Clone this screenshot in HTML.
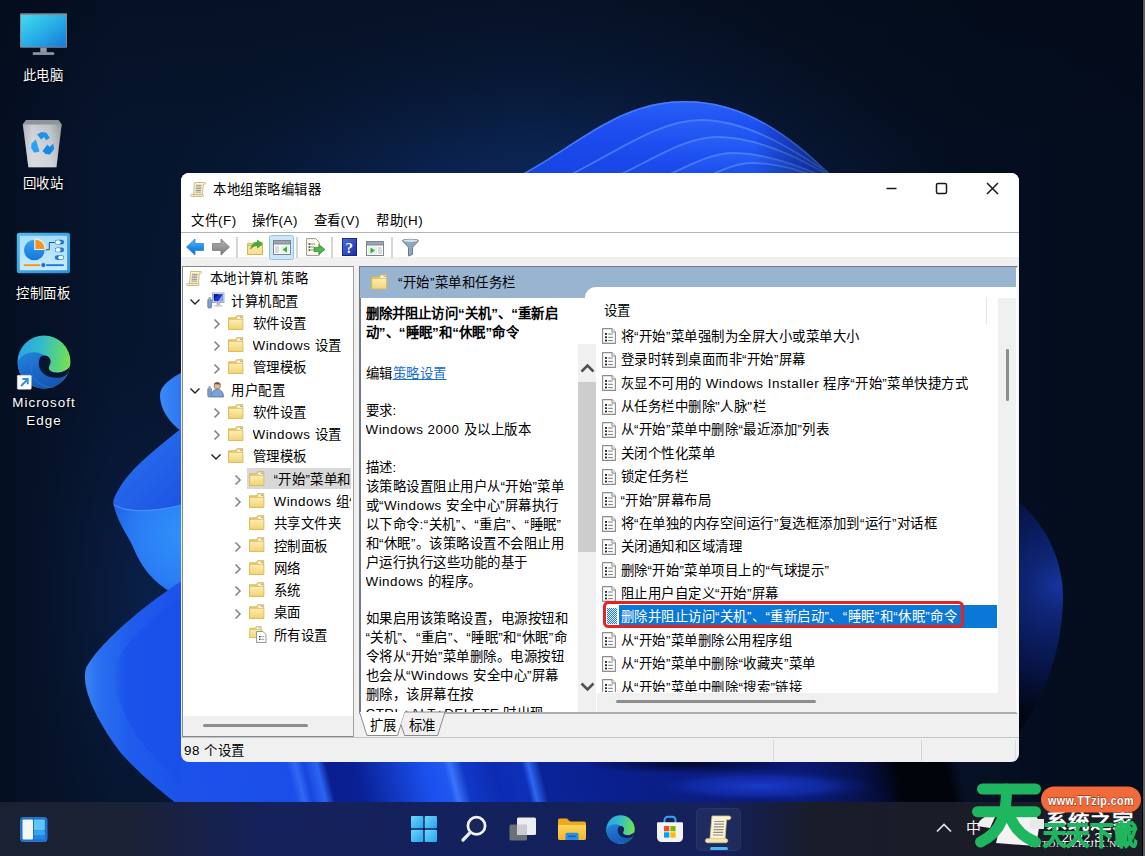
<!DOCTYPE html>
<html lang="zh-CN"><head><meta charset="utf-8"><title>本地组策略编辑器</title>
<style>
html,body{margin:0;padding:0;}
body{width:1145px;height:856px;overflow:hidden;position:relative;background:#060d1c;font-family:"Liberation Sans",sans-serif;font-size:13.4px;color:#000;letter-spacing:.5px;}
.abs{position:absolute;}
.t{position:absolute;white-space:nowrap;line-height:18px;height:18px;overflow:hidden;color:#000;}
.dl{position:absolute;white-space:nowrap;color:#fff;text-align:center;line-height:18px;font-size:13.4px;text-shadow:0 1px 2px rgba(0,0,0,.95),0 0 2px rgba(0,0,0,.8);}
#win{position:absolute;left:181px;top:173px;width:838px;height:589px;background:#f0f0f0;border-radius:8px;overflow:hidden;}
svg{position:absolute;overflow:visible;}
</style></head><body>
<svg id="wall" width="1145" height="856" viewBox="0 0 1145 856" style="left:0;top:0;overflow:hidden">
<defs>
<linearGradient id="bg" x1="0" y1="0" x2="1" y2="0">
<stop offset="0" stop-color="#050f22"/><stop offset=".1" stop-color="#06152e"/><stop offset=".45" stop-color="#071730"/><stop offset=".7" stop-color="#051124"/><stop offset=".87" stop-color="#040e20"/><stop offset="1" stop-color="#040d1e"/>
</linearGradient>
<radialGradient id="glow" cx="0" cy="0" r="1" gradientUnits="userSpaceOnUse" gradientTransform="translate(560 310) scale(430 340)">
<stop offset="0" stop-color="#113886" stop-opacity=".75"/><stop offset=".5" stop-color="#0f3276" stop-opacity=".42"/><stop offset="1" stop-color="#0b1c44" stop-opacity="0"/>
</radialGradient>
<radialGradient id="glow2" cx="0" cy="0" r="1" gradientUnits="userSpaceOnUse" gradientTransform="translate(150 600) scale(130 260)">
<stop offset="0" stop-color="#0f2c66" stop-opacity=".5"/><stop offset="1" stop-color="#0b1c44" stop-opacity="0"/>
</radialGradient>
<linearGradient id="topdark" x1="0" y1="0" x2="0" y2="1"><stop offset="0" stop-color="#030812" stop-opacity=".35"/><stop offset="1" stop-color="#030812" stop-opacity="0"/></linearGradient>
<linearGradient id="a1" x1="0" y1="101" x2="0" y2="190" gradientUnits="userSpaceOnUse"><stop offset="0" stop-color="#2a60f6"/><stop offset=".3" stop-color="#1d4ef0"/><stop offset="1" stop-color="#1640de"/></linearGradient>
<linearGradient id="a2" x1="0" y1="120" x2="0" y2="190" gradientUnits="userSpaceOnUse"><stop offset="0" stop-color="#2a60f6"/><stop offset=".35" stop-color="#1d4ef0"/><stop offset="1" stop-color="#1640de"/></linearGradient>
<linearGradient id="a3" x1="0" y1="137" x2="0" y2="190" gradientUnits="userSpaceOnUse"><stop offset="0" stop-color="#2a60f6"/><stop offset=".4" stop-color="#1d4ef0"/><stop offset="1" stop-color="#1640de"/></linearGradient>
<linearGradient id="a4" x1="0" y1="153" x2="0" y2="190" gradientUnits="userSpaceOnUse"><stop offset="0" stop-color="#2a60f6"/><stop offset=".5" stop-color="#1d4ef0"/><stop offset="1" stop-color="#1842e0"/></linearGradient>
<linearGradient id="ashade" x1="520" y1="0" x2="845" y2="0" gradientUnits="userSpaceOnUse"><stop offset="0" stop-color="#000" stop-opacity="0"/><stop offset=".72" stop-color="#000" stop-opacity="0"/><stop offset="1" stop-color="#020828" stop-opacity=".6"/></linearGradient>
<clipPath id="arcclip"><path d="M470 195 C560 170 600 101 685 101 C745 101 795 135 850 195 Z"/></clipPath>
<linearGradient id="p1" x1="160" y1="0" x2="195" y2="0" gradientUnits="userSpaceOnUse"><stop offset="0" stop-color="#3b8af7"/><stop offset="1" stop-color="#2468ee"/></linearGradient>
<linearGradient id="p2" x1="113" y1="440" x2="190" y2="520" gradientUnits="userSpaceOnUse"><stop offset="0" stop-color="#2a72f0"/><stop offset="1" stop-color="#1a4fe0"/></linearGradient>
<radialGradient id="p2c" cx="185" cy="535" r="85" gradientUnits="userSpaceOnUse"><stop offset="0" stop-color="#2f92fa"/><stop offset=".6" stop-color="#2a7cf4"/><stop offset="1" stop-color="#1c58e4"/></radialGradient>
<linearGradient id="p3" x1="84" y1="0" x2="200" y2="0" gradientUnits="userSpaceOnUse"><stop offset="0" stop-color="#3a88f6"/><stop offset=".12" stop-color="#2a70f0"/><stop offset=".4" stop-color="#1f5cec"/><stop offset="1" stop-color="#1a4ee8"/></linearGradient>
<linearGradient id="p3i" x1="112" y1="0" x2="230" y2="0" gradientUnits="userSpaceOnUse"><stop offset="0" stop-color="#2566ef"/><stop offset=".12" stop-color="#1b52ea"/><stop offset=".6" stop-color="#1a50ea"/><stop offset="1" stop-color="#1644e0"/></linearGradient>
<linearGradient id="bot" x1="181" y1="0" x2="1030" y2="0" gradientUnits="userSpaceOnUse" gradientTransform="rotate(-14 600 780)"><stop offset="0.0000" stop-color="#1c52ea"/><stop offset="0.1402" stop-color="#1a4eea"/><stop offset="0.1496" stop-color="#3068f4"/><stop offset="0.1590" stop-color="#1846e0"/><stop offset="0.1743" stop-color="#2c64f2"/><stop offset="0.1849" stop-color="#0a1e90"/><stop offset="0.2167" stop-color="#0a2094"/><stop offset="0.2968" stop-color="#1a50ee"/><stop offset="0.3192" stop-color="#2058f0"/><stop offset="0.3263" stop-color="#3a74f8"/><stop offset="0.3404" stop-color="#1238c8"/><stop offset="0.3757" stop-color="#0c2cb0"/><stop offset="0.4087" stop-color="#0e30b8"/><stop offset="0.4158" stop-color="#2e66f2"/><stop offset="0.4287" stop-color="#0a2498"/><stop offset="0.4935" stop-color="#0a2090"/><stop offset="0.6113" stop-color="#0a1c80"/><stop offset="0.7291" stop-color="#0a1a74"/><stop offset="0.7880" stop-color="#07124e"/><stop offset="0.8174" stop-color="#040a2c"/><stop offset="0.8351" stop-color="#02040c"/><stop offset="0.8916" stop-color="#02040c"/><stop offset="0.9081" stop-color="#071126"/><stop offset="0.9529" stop-color="#051022"/><stop offset="1.0000" stop-color="#040e20"/></linearGradient>
<radialGradient id="lens" cx="0" cy="0" r="1" gradientUnits="userSpaceOnUse" gradientTransform="translate(760 786) scale(115 16)"><stop offset="0" stop-color="#1a3cd0" stop-opacity=".95"/><stop offset=".6" stop-color="#1432b8" stop-opacity=".6"/><stop offset="1" stop-color="#0a1a78" stop-opacity="0"/></radialGradient>
<radialGradient id="cres" cx="0" cy="0" r="1" gradientUnits="userSpaceOnUse" gradientTransform="translate(690 764) scale(110 10)"><stop offset="0" stop-color="#030828" stop-opacity=".9"/><stop offset="1" stop-color="#030828" stop-opacity="0"/></radialGradient>
<radialGradient id="ball" cx="1058" cy="585" r="150" gradientUnits="userSpaceOnUse"><stop offset="0" stop-color="#17349c"/><stop offset=".18" stop-color="#0f2678"/><stop offset=".5" stop-color="#081750"/><stop offset=".85" stop-color="#030818"/><stop offset="1" stop-color="#02050e"/></radialGradient>
</defs>
<rect width="1145" height="856" fill="url(#bg)"/>
<rect width="1145" height="856" fill="url(#glow)"/>
<rect width="1145" height="856" fill="url(#glow2)"/>
<rect width="1145" height="150" fill="url(#topdark)"/>
<!-- top arc petals -->
<g clip-path="url(#arcclip)">
<rect x="460" y="95" width="400" height="100" fill="url(#a1)"/>
<path d="M470 195 C560 170 600 101 685 101 C745 101 795 135 850 195" fill="none" stroke="#4a84fc" stroke-width="3" opacity=".8"/>
<g stroke="#4a82fb" stroke-width="1.800" stroke-opacity=".85">
<path d="M515 197 C590 176 645 120 701 120 C745 120 790 145 860 195 Z" fill="url(#a2)"/>
<path d="M560 197 C630 180 672 137 717 137 C755 137 800 155 860 195 Z" fill="url(#a3)"/>
<path d="M605 197 C670 182 698 153 733 153 C765 153 805 165 860 195 Z" fill="url(#a4)"/>
<path d="M645 197 C700 186 724 163 752 163 C780 163 810 172 860 195 Z" fill="#1e52ee"/>
</g>
<rect x="460" y="95" width="400" height="100" fill="url(#ashade)"/>
</g>
<!-- left petals -->
<path d="M200 364 C180 372 160 383 160 395 C160 412 172 428 200 444 Z" fill="url(#p1)"/>
<path d="M200 414 C175 434 135 462 120 487 C114 497 112 502 114 506 C119 526 129 536 134 549 C141 566 152 581 172 593 L200 608 Z" fill="url(#p2)"/>
<path d="M114 505 C130 514 160 512 200 500 L200 608 L172 593 C152 581 141 566 134 549 C129 536 119 526 114 505 Z" fill="url(#p2c)"/><path d="M114 505 C130 514 160 512 200 500" fill="none" stroke="#4d9dfa" stroke-width="1.200" opacity=".8"/>
<path d="M200 570 C160 592 100 640 86 668 C80 690 100 725 120 752 C140 775 165 795 200 822 L330 822 L330 570 Z" fill="url(#p3)"/>
<path d="M200 583 C165 605 125 640 117 662 C110 690 125 718 140 740 C160 765 180 785 215 817 L330 817 L330 583 Z" fill="url(#p3i)"/>
<!-- bottom strip -->
<rect x="181" y="750" width="838" height="56" fill="url(#bot)"/>
<rect x="560" y="750" width="330" height="56" fill="url(#cres)"/>
<rect x="600" y="750" width="300" height="56" fill="url(#lens)"/>
<!-- right ball -->
<path d="M1010 495 C1045 520 1064 560 1063 600 C1062 650 1045 700 1010 745 Z" fill="url(#ball)"/>
</svg>
<div class="abs" id="taskbar" style="left:0;top:802px;width:1145px;height:54px;background:linear-gradient(90deg,#1a2132 0%,#1a2134 11%,#15215a 23%,#13215c 40%,#14215a 63%,#161e42 67%,#191c29 71%,#1b1d26 100%);"></div>
<svg width="0" height="0" style="left:0;top:0"><defs>
<linearGradient id="gfold" x1="0" y1="0" x2="0" y2="1"><stop offset="0" stop-color="#fdeeb4"/><stop offset="1" stop-color="#f3d474"/></linearGradient>
<symbol id="fold" viewBox="0 0 16 15.500">
<path d="M.6 2.900h7l1.400-2.200h6.400v14.200H.6z" fill="#f1d274" stroke="#d8b352" stroke-width=".9" stroke-linejoin="round"/>
<path d="M9.700 1.700h4.700v2.400H9.700z" fill="#fff"/><path d="M12.200 1.700h2.200v1.300h-2.200z" fill="#8ab4e0"/>
<path d="M.6 4.400h14.800v10.500H.6z" fill="url(#gfold)" stroke="#dcb95a" stroke-width=".9" stroke-linejoin="round"/>
</symbol>
<symbol id="pol" viewBox="0 0 14 16">
<path d="M.6.6h9.3l3.5 3.5v11.3H.6z" fill="#fff" stroke="#8c8c8c" stroke-width="1.1" stroke-linejoin="round"/>
<path d="M9.9.6v3.5h3.5" fill="#f2f2f2" stroke="#8c8c8c" stroke-width="1"/>
<rect x="3" y="5" width="2" height="1.8" fill="#222"/><rect x="3" y="8.3" width="2" height="1.8" fill="#222"/><rect x="3" y="11.6" width="2" height="1.8" fill="#222"/>
<rect x="6.2" y="5.5" width="4.6" height="1" fill="#777"/><rect x="6.2" y="8.8" width="4.6" height="1" fill="#777"/><rect x="6.2" y="12.1" width="4.6" height="1" fill="#777"/>
</symbol>
<symbol id="scroll" viewBox="0 0 17 17">
<path d="M4.5 1.5h10.3c1 0 1.2 1.6 0 1.8h-1.4l-1 10.2H3.6z" fill="#fbf2cf" stroke="#c9b67c" stroke-width=".9" stroke-linejoin="round"/>
<path d="M1.2 13.4h11.4c1 .2 1 1.9 0 2.1H1.4c-1-.3-1-1.8-.2-2.1z" fill="#f7eab6" stroke="#c9b67c" stroke-width=".9"/>
<path d="M6 4.3h5.6M5.9 6h5.6M5.7 7.7h5.6M5.6 9.4h5.6M5.4 11.1h5.6" stroke="#8a8a8a" stroke-width=".9"/>
</symbol>
<symbol id="comp" viewBox="0 0 18 17">
<rect x="5.5" y="1" width="11.5" height="9.5" fill="#dfe5ee" stroke="#9aa7b8" stroke-width=".9"/>
<rect x="6.8" y="2.2" width="9" height="7" fill="#1a33c9"/>
<path d="M6.8 2.2h5l-5 5z" fill="#0b14a0"/><path d="M11 9.2l4.8-7v7z" fill="#8aa3ef"/>
<rect x="9.5" y="10.8" width="3.5" height="2.3" fill="#b7bec9"/><rect x="7.5" y="13" width="8" height="1.6" fill="#c9ced6"/>
<rect x=".8" y="7" width="3.8" height="9" rx="1.2" fill="#7f9fd0" stroke="#5d7cae" stroke-width=".8"/>
<rect x="1.6" y="5" width="2.2" height="3" fill="#9aa9bd"/>
</symbol>
<symbol id="user" viewBox="0 0 18 17">
<circle cx="10.3" cy="4.6" r="3.3" fill="#e3b98c" stroke="#8a6a4a" stroke-width=".7"/>
<path d="M7 3.5c.6-2.6 5.6-2.8 6.6.3-1.6-.6-4.4-.9-6.6-.3z" fill="#6b5040"/>
<path d="M4.2 16c0-5.2 2.6-7.6 6.1-7.6s6.2 2.400 6.200 7.600z" fill="#7ea0d6" stroke="#4e6fa4" stroke-width=".8"/>
<rect x=".8" y="7" width="3.600" height="9" rx="1.2" fill="#7f9fd0" stroke="#5d7cae" stroke-width=".8"/>
<rect x="1.6" y="5" width="2" height="3" fill="#9aa9bd"/>
</symbol>
<symbol id="allset" viewBox="0 0 18 17">
<use href="#fold" x="0" y="0" width="13" height="12"/>
<path d="M7.5 5.500h6.500l3 3v8h-9.500z" fill="#fff" stroke="#8c8c8c" stroke-width=".9"/>
<rect x="10" y="10" width="1.500" height="1.300" fill="#333"/><rect x="10" y="12.600" width="1.500" height="1.300" fill="#333"/><rect x="12.300" y="10.300" width="3" height=".8" fill="#888"/><rect x="12.300" y="12.900" width="3" height=".8" fill="#888"/>
</symbol>
</defs></svg>
<div id="win"><div class="abs" style="left:0.0px;top:0.0px;width:838.0px;height:84.0px;background:#fff;"></div><div class="abs" style="left:0.0px;top:59.0px;width:838.0px;height:1.0px;background:#b4b4b4;"></div><svg width="17.0" height="17.0" style="left:8.5px;top:7.5px"><use href="#scroll" width="17.0" height="17.0"/></svg><div class="t" style="left:32.0px;top:8.2px;">本地组策略编辑器</div><svg width="140" height="30" style="left:700px;top:0px"><path d="M5.500 15.500h10" stroke="#1a1a1a" stroke-width="1.500"/><rect x="55.500" y="10.500" width="10" height="10" rx="1.500" fill="none" stroke="#1a1a1a" stroke-width="1.500"/><path d="M106 10l11 11M117 10l-11 11" stroke="#1a1a1a" stroke-width="1.500"/></svg><div class="t" style="left:10.0px;top:38.7px;">文件(F)</div><div class="t" style="left:70.5px;top:38.7px;">操作(A)</div><div class="t" style="left:132.5px;top:38.7px;">查看(V)</div><div class="t" style="left:195.0px;top:38.7px;">帮助(H)</div><svg width="260" height="28" style="left:2px;top:61px"><defs><linearGradient id="gb" x1="0" y1="0" x2="0" y2="1"><stop offset="0" stop-color="#6cc3f7"/><stop offset=".5" stop-color="#1f8fe8"/><stop offset="1" stop-color="#0f6fd0"/></linearGradient>
<linearGradient id="gg" x1="0" y1="0" x2="0" y2="1"><stop offset="0" stop-color="#b5b5b5"/><stop offset="1" stop-color="#7b7b7b"/></linearGradient>
<linearGradient id="gq" x1="0" y1="0" x2="1" y2="1"><stop offset="0" stop-color="#4a6fe0"/><stop offset="1" stop-color="#1a2fa8"/></linearGradient></defs>
<path d="M3.500 13l8.500-8v4.600h8.500v6.800h-8.500v4.600z" fill="url(#gb)" stroke="#2d7fd0" stroke-width=".8" stroke-linejoin="round"/>
<path d="M46.500 13l-8.500-8v4.600h-8.500v6.800h8.500v4.600z" fill="url(#gg)" stroke="#777" stroke-width=".8" stroke-linejoin="round"/>
<rect x="53.500" y="3" width="1" height="21" fill="#aeaeae"/>
<g transform="translate(64,5)"><path d="M.6 4.500h5l1.500-1.300h8.300v12.300H.6z" fill="#f4d77e" stroke="#d2ad52" stroke-width=".9"/><path d="M.6 6.500h14.800v9H.6z" fill="#f8e39a" stroke="#d2ad52" stroke-width=".9"/><path d="M3.500 10c1.500-5 4-6.500 7-6.500v-2.500l4.500 4-4.500 4v-2.500c-2.500 0-4.500.5-7 3.500z" fill="#3fae3f" stroke="#2a8a2a" stroke-width=".6"/></g>
<rect x="86.500" y="1.500" width="24" height="24" rx="2" fill="#cde6f7" stroke="#8fc4ea" stroke-width="1"/>
<g transform="translate(90,6)"><rect x=".5" y=".5" width="17" height="14" fill="#fff" stroke="#7d8794" stroke-width="1"/><rect x=".5" y=".5" width="17" height="3.500" fill="#9aa5b3" stroke="#7d8794"/><rect x="2" y="6" width="4" height="7" fill="#d7dde5"/><rect x="7.500" y="5.500" width="9" height="8" fill="#e6f3e6"/><path d="M14 6.500v6l-4.500-3z" fill="#3cae3c"/></g>
<rect x="113.500" y="3" width="1" height="21" fill="#aeaeae"/>
<g transform="translate(123,4)"><path d="M.6.600h9l3.500 3.500v13.300H.6z" fill="#fffdf0" stroke="#9a9a8a" stroke-width="1"/><path d="M3 6h6M3 9h5M3 12h5" stroke="#8b8b8b" stroke-width="1.200"/><rect x="2.500" y="5.400" width="1.500" height="1.300" fill="#333"/><rect x="2.500" y="8.400" width="1.500" height="1.300" fill="#333"/><rect x="2.500" y="11.400" width="1.500" height="1.300" fill="#333"/><path d="M8 9.500h5v-3l6 5-6 5v-3h-5z" fill="#4cba4c" stroke="#2c8c2c" stroke-width=".7" stroke-linejoin="round"/></g>
<rect x="148.500" y="3" width="1" height="21" fill="#aeaeae"/>
<g transform="translate(159,4)"><rect x=".5" y=".5" width="14" height="17" fill="url(#gq)" stroke="#18267e" stroke-width="1"/><text x="7.500" y="14.500" text-anchor="middle" font-family="Liberation Serif,serif" font-weight="bold" font-size="15" fill="#fff">?</text></g>
<g transform="translate(183,7)"><rect x=".5" y=".5" width="17" height="14" fill="#fff" stroke="#7d8794" stroke-width="1"/><rect x=".5" y=".5" width="17" height="3.500" fill="#9aa5b3" stroke="#7d8794"/><rect x="12" y="6" width="4" height="7" fill="#d7dde5"/><rect x="2" y="5.500" width="9" height="8" fill="#e6f3e6"/><path d="M4.500 6.500v6l4.500-3z" fill="#3cae3c"/></g>
<rect x="208.500" y="3" width="1" height="21" fill="#aeaeae"/>
<g transform="translate(219,5)"><path d="M.5 1.500c0-1.500 16-1.500 16 0 0 1.200-6 6-6 7.500v6.500l-4 1.500v-8c0-1.500-6-6.300-6-7.500z" fill="#8fa6bf" stroke="#5f748c" stroke-width=".9"/><ellipse cx="8.500" cy="1.700" rx="7" ry="1.200" fill="#d9e3ee"/></g>
</svg><div class="abs" style="left:1.0px;top:93.0px;width:172.0px;height:471.0px;background:#fff;border:1px solid #828790;box-sizing:border-box;border-right-color:#a0a0a0;"></div><div class="abs" style="left:2.0px;top:543.0px;width:170.0px;height:20.0px;background:#f0f0f0;"></div><div class="abs" style="left:21.5px;top:550.8px;width:105.5px;height:3.0px;background:#8d8d8d;border-radius:1.500px;"></div><div class="abs" style="left:2px;top:94px;width:167.500px;height:449px;overflow:hidden"><svg width="17" height="17" style="left:3.0px;top:2.7px"><use href="#scroll" width="17" height="17"/></svg><div class="t" style="left:26.5px;top:3.2px">本地计算机 策略</div><svg width="12" height="10" style="left:5.5px;top:29.5px"><path d="M1.500 2.500l4.500 4.500 4.500-4.500" fill="none" stroke="#222" stroke-width="1.400"/></svg><svg width="18" height="17" style="left:24.0px;top:25.0px"><use href="#comp" width="18" height="17"/></svg><div class="t" style="left:48.0px;top:25.5px">计算机配置</div><svg width="10" height="12" style="left:28.5px;top:51.0px"><path d="M2.500 1.500l4.500 4.500-4.500 4.500" fill="none" stroke="#858585" stroke-width="1.600"/></svg><svg width="15.500" height="15" style="left:45.4px;top:47.6px"><use href="#fold" width="15.500" height="15"/></svg><div class="t" style="left:69.5px;top:47.8px">软件设置</div><svg width="10" height="12" style="left:28.5px;top:73.2px"><path d="M2.500 1.500l4.500 4.500-4.500 4.500" fill="none" stroke="#858585" stroke-width="1.600"/></svg><svg width="15.500" height="15" style="left:45.4px;top:69.8px"><use href="#fold" width="15.500" height="15"/></svg><div class="t" style="left:69.5px;top:70.0px">Windows 设置</div><svg width="10" height="12" style="left:28.5px;top:95.5px"><path d="M2.500 1.500l4.500 4.500-4.500 4.500" fill="none" stroke="#858585" stroke-width="1.600"/></svg><svg width="15.500" height="15" style="left:45.4px;top:92.1px"><use href="#fold" width="15.500" height="15"/></svg><div class="t" style="left:69.5px;top:92.3px">管理模板</div><svg width="12" height="10" style="left:5.5px;top:118.6px"><path d="M1.500 2.500l4.500 4.500 4.500-4.500" fill="none" stroke="#222" stroke-width="1.400"/></svg><svg width="18" height="17" style="left:24.0px;top:114.1px"><use href="#user" width="18" height="17"/></svg><div class="t" style="left:48.0px;top:114.6px">用户配置</div><svg width="10" height="12" style="left:28.5px;top:140.1px"><path d="M2.500 1.500l4.500 4.500-4.500 4.500" fill="none" stroke="#858585" stroke-width="1.600"/></svg><svg width="15.500" height="15" style="left:45.4px;top:136.7px"><use href="#fold" width="15.500" height="15"/></svg><div class="t" style="left:69.5px;top:136.9px">软件设置</div><svg width="10" height="12" style="left:28.5px;top:162.4px"><path d="M2.500 1.500l4.500 4.500-4.500 4.500" fill="none" stroke="#858585" stroke-width="1.600"/></svg><svg width="15.500" height="15" style="left:45.4px;top:159.0px"><use href="#fold" width="15.500" height="15"/></svg><div class="t" style="left:69.5px;top:159.2px">Windows 设置</div><svg width="12" height="10" style="left:27.0px;top:185.4px"><path d="M1.500 2.500l4.500 4.500 4.500-4.500" fill="none" stroke="#222" stroke-width="1.400"/></svg><svg width="15.500" height="15" style="left:45.4px;top:181.2px"><use href="#fold" width="15.500" height="15"/></svg><div class="t" style="left:69.5px;top:181.4px">管理模板</div><div class="abs" style="left:64.0px;top:201.2px;width:120px;height:21px;background:#d8d8d8"></div><svg width="10" height="12" style="left:50.0px;top:206.9px"><path d="M2.500 1.500l4.500 4.500-4.500 4.500" fill="none" stroke="#858585" stroke-width="1.600"/></svg><svg width="15.500" height="15" style="left:66.4px;top:203.5px"><use href="#fold" width="15.500" height="15"/></svg><div class="t" style="left:90.5px;top:203.7px">“开始”菜单和任务栏</div><svg width="10" height="12" style="left:50.0px;top:229.2px"><path d="M2.500 1.500l4.500 4.500-4.500 4.500" fill="none" stroke="#858585" stroke-width="1.600"/></svg><svg width="15.500" height="15" style="left:66.4px;top:225.8px"><use href="#fold" width="15.500" height="15"/></svg><div class="t" style="left:90.5px;top:226.0px">Windows 组件</div><svg width="15.500" height="15" style="left:66.4px;top:248.1px"><use href="#fold" width="15.500" height="15"/></svg><div class="t" style="left:90.5px;top:248.3px">共享文件夹</div><svg width="10" height="12" style="left:50.0px;top:273.8px"><path d="M2.500 1.500l4.500 4.500-4.500 4.500" fill="none" stroke="#858585" stroke-width="1.600"/></svg><svg width="15.500" height="15" style="left:66.4px;top:270.4px"><use href="#fold" width="15.500" height="15"/></svg><div class="t" style="left:90.5px;top:270.6px">控制面板</div><svg width="10" height="12" style="left:50.0px;top:296.0px"><path d="M2.500 1.500l4.500 4.500-4.500 4.500" fill="none" stroke="#858585" stroke-width="1.600"/></svg><svg width="15.500" height="15" style="left:66.4px;top:292.6px"><use href="#fold" width="15.500" height="15"/></svg><div class="t" style="left:90.5px;top:292.8px">网络</div><svg width="10" height="12" style="left:50.0px;top:318.3px"><path d="M2.500 1.500l4.500 4.500-4.500 4.500" fill="none" stroke="#858585" stroke-width="1.600"/></svg><svg width="15.500" height="15" style="left:66.4px;top:314.9px"><use href="#fold" width="15.500" height="15"/></svg><div class="t" style="left:90.5px;top:315.1px">系统</div><svg width="10" height="12" style="left:50.0px;top:340.6px"><path d="M2.500 1.500l4.500 4.500-4.500 4.500" fill="none" stroke="#858585" stroke-width="1.600"/></svg><svg width="15.500" height="15" style="left:66.4px;top:337.2px"><use href="#fold" width="15.500" height="15"/></svg><div class="t" style="left:90.5px;top:337.4px">桌面</div><svg width="18" height="17" style="left:66.0px;top:359.2px"><use href="#allset" width="18" height="17"/></svg><div class="t" style="left:90.5px;top:359.7px">所有设置</div></div><div class="abs" style="left:177.5px;top:92.8px;width:659.5px;height:448.7px;background:#fff;border-top:2px solid #737a84;border-left:2px solid #737a84;border-right:2px solid #fafafa;box-sizing:border-box;border-bottom:2px solid #adadad;"></div><div class="abs" style="left:179.0px;top:94.0px;width:656.0px;height:30.5px;background:#99b4d1;"></div><svg width="16.5" height="15.5" style="left:190.0px;top:101.0px"><use href="#fold" width="16.5" height="15.5"/></svg><div class="t" style="left:217.0px;top:100.7px;">“开始”菜单和任务栏</div><div class="abs" style="left:404.0px;top:114.0px;width:431.0px;height:425.0px;background:#fff;border-top-left-radius:11px;"></div><div class="t" style="left:422.5px;top:129.2px;">设置</div><div class="abs" style="left:804.5px;top:124.0px;width:1.0px;height:27.0px;background:#e6e6e6;"></div><div class="abs" style="left:817.4px;top:125.0px;width:18.0px;height:400.0px;background:#f0f0f0;"></div><div class="abs" style="left:825.2px;top:176.0px;width:2.6px;height:52.0px;background:#8d8d8d;border-radius:1.300px;"></div><div class="abs" style="left:416.0px;top:519.5px;width:419.0px;height:19.5px;background:#f0f0f0;"></div><div class="abs" style="left:434.5px;top:527.0px;width:200.5px;height:3.0px;background:#8d8d8d;border-radius:1.500px;"></div><div class="abs" style="left:396.5px;top:171.0px;width:18.5px;height:368.0px;background:#f0f0f0;"></div><div class="abs" style="left:396.5px;top:209.0px;width:18.5px;height:170.0px;background:#cdcdcd;"></div><svg width="19" height="12" style="left:396.5px;top:189.0px"><path d="M3.500 9.500l6-6 6 6" fill="none" stroke="#505050" stroke-width="2.500"/></svg><svg width="19" height="12" style="left:396.5px;top:508.0px"><path d="M3.500 2.500l6 6 6-6" fill="none" stroke="#505050" stroke-width="2.500"/></svg><div class="abs" style="left:416px;top:150px;width:401px;height:369px;overflow:hidden"><svg width="14" height="16" style="left:5.0px;top:5.4px"><use href="#pol" width="14" height="16"/></svg><div class="t" style="left:23.5px;top:4.8px;">将“开始”菜单强制为全屏大小或菜单大小</div><svg width="14" height="16" style="left:5.0px;top:28.8px"><use href="#pol" width="14" height="16"/></svg><div class="t" style="left:23.5px;top:28.2px;">登录时转到桌面而非“开始”屏幕</div><svg width="14" height="16" style="left:5.0px;top:52.2px"><use href="#pol" width="14" height="16"/></svg><div class="t" style="left:23.5px;top:51.6px;">灰显不可用的 Windows Installer 程序“开始”菜单快捷方式</div><svg width="14" height="16" style="left:5.0px;top:75.6px"><use href="#pol" width="14" height="16"/></svg><div class="t" style="left:23.5px;top:75.0px;">从任务栏中删除"人脉"栏</div><svg width="14" height="16" style="left:5.0px;top:98.9px"><use href="#pol" width="14" height="16"/></svg><div class="t" style="left:23.5px;top:98.3px;">从“开始”菜单中删除“最近添加”列表</div><svg width="14" height="16" style="left:5.0px;top:122.3px"><use href="#pol" width="14" height="16"/></svg><div class="t" style="left:23.5px;top:121.7px;">关闭个性化菜单</div><svg width="14" height="16" style="left:5.0px;top:145.7px"><use href="#pol" width="14" height="16"/></svg><div class="t" style="left:23.5px;top:145.1px;">锁定任务栏</div><svg width="14" height="16" style="left:5.0px;top:169.1px"><use href="#pol" width="14" height="16"/></svg><div class="t" style="left:23.5px;top:168.5px;">“开始”屏幕布局</div><svg width="14" height="16" style="left:5.0px;top:192.5px"><use href="#pol" width="14" height="16"/></svg><div class="t" style="left:23.5px;top:191.9px;">将“在单独的内存空间运行”复选框添加到“运行”对话框</div><svg width="14" height="16" style="left:5.0px;top:215.9px"><use href="#pol" width="14" height="16"/></svg><div class="t" style="left:23.5px;top:215.3px;">关闭通知和区域清理</div><svg width="14" height="16" style="left:5.0px;top:239.2px"><use href="#pol" width="14" height="16"/></svg><div class="t" style="left:23.5px;top:238.6px;">删除“开始”菜单项目上的“气球提示”</div><svg width="14" height="16" style="left:5.0px;top:262.6px"><use href="#pol" width="14" height="16"/></svg><div class="t" style="left:23.5px;top:262.0px;">阻止用户自定义“开始”屏幕</div><div class="abs" style="left:21.5px;top:282.2px;width:378.5px;height:23.100px;background:#0a78d7"></div><svg width="10" height="16" style="left:9.5px;top:285.3px"><defs><pattern id="dith" width="2" height="2" patternUnits="userSpaceOnUse"><rect width="2" height="2" fill="#dfeefa"/><rect width="1" height="1" fill="#1f7fd8"/><rect x="1" y="1" width="1" height="1" fill="#1f7fd8"/></pattern></defs><rect width="10" height="16" fill="url(#dith)"/></svg><div class="t" style="left:23.5px;top:285.4px;color:#fff;">删除并阻止访问“关机”、“重新启动”、“睡眠”和“休眠”命令</div><svg width="14" height="16" style="left:5.0px;top:309.4px"><use href="#pol" width="14" height="16"/></svg><div class="t" style="left:23.5px;top:308.8px;">从“开始”菜单删除公用程序组</div><svg width="14" height="16" style="left:5.0px;top:332.8px"><use href="#pol" width="14" height="16"/></svg><div class="t" style="left:23.5px;top:332.2px;">从“开始”菜单中删除“收藏夹”菜单</div><svg width="14" height="16" style="left:5.0px;top:356.2px"><use href="#pol" width="14" height="16"/></svg><div class="t" style="left:23.5px;top:355.6px;">从“开始”菜单中删除“搜索”链接</div></div><div class="abs" style="left:421.8px;top:427.8px;width:361.7px;height:27.5px;background:transparent;border:3px solid #e8221e;border-radius:5.500px;box-sizing:border-box;"></div><div class="abs" style="left:179px;top:124px;width:218px;height:415px;overflow:hidden"><div class="t" style="left:5.5px;top:8.0px;font-weight:bold;letter-spacing:.2px;">删除并阻止访问“关机”、“重新启</div><div class="t" style="left:5.5px;top:26.5px;font-weight:bold;letter-spacing:.2px;">动”、“睡眠”和“休眠”命令</div><div class="t" style="left:5.5px;top:67.7px;">编辑<span style="color:#1a6fd4;text-decoration:underline">策略设置</span></div><div class="t" style="left:5.5px;top:105.2px;">要求:</div><div class="t" style="left:5.5px;top:124.1px;">Windows 2000 及以上版本</div><div class="t" style="left:5.5px;top:162.0px;">描述:</div><div class="t" style="left:5.5px;top:180.9px;">该策略设置阻止用户从“开始”菜单</div><div class="t" style="left:5.5px;top:199.9px;">或“Windows 安全中心”屏幕执行</div><div class="t" style="left:5.5px;top:218.8px;">以下命令:“关机”、“重启”、“睡眠”</div><div class="t" style="left:5.5px;top:237.7px;">和“休眠”。该策略设置不会阻止用</div><div class="t" style="left:5.5px;top:256.7px;">户运行执行这些功能的基于</div><div class="t" style="left:5.5px;top:275.6px;">Windows 的程序。</div><div class="t" style="left:5.5px;top:313.4px;">如果启用该策略设置，电源按钮和</div><div class="t" style="left:5.5px;top:332.4px;">“关机”、“重启”、“睡眠”和“休眠”命</div><div class="t" style="left:5.5px;top:351.3px;">令将从“开始”菜单删除。电源按钮</div><div class="t" style="left:5.5px;top:370.2px;">也会从“Windows 安全中心”屏幕</div><div class="t" style="left:5.5px;top:389.2px;">删除，该屏幕在按</div><div class="t" style="left:5.5px;top:408.1px;">CTRL+ALT+DELETE 时出现。</div></div><svg width="120" height="26" style="left:178px;top:539px"><path d="M.5 0l7.500 23.500h30.500l7.500-23.500" fill="#fff" stroke="#8a8a8a" stroke-width="1"/><path d="M42 12.500l3.600 11h33l7.400-23.500h-40" fill="#f0f0f0" stroke="#8a8a8a" stroke-width="1"/></svg><div class="t" style="left:188.5px;top:543.7px;">扩展</div><div class="t" style="left:227.5px;top:543.7px;">标准</div><div class="abs" style="left:0.0px;top:563.5px;width:838.0px;height:1.0px;background:#c4c4c4;"></div><div class="t" style="left:3.0px;top:568.7px;">98 个设置</div><div class="abs" style="left:592.0px;top:567.0px;width:1.0px;height:21.0px;background:#d7d7d7;"></div><div class="abs" style="left:740.0px;top:567.0px;width:1.0px;height:21.0px;background:#d7d7d7;"></div><div class="abs" style="left:833.5px;top:567.0px;width:1.0px;height:21.0px;background:#dcdcdc;"></div></div><svg width="52" height="46" style="left:18px;top:11px"><defs>
<linearGradient id="scr" x1="0" y1="0" x2="1" y2="1"><stop offset="0" stop-color="#3fdcf0"/><stop offset=".55" stop-color="#27a9e6"/><stop offset="1" stop-color="#1878d8"/></linearGradient>
<linearGradient id="stand" x1="0" y1="0" x2="0" y2="1"><stop offset="0" stop-color="#9aa3ad"/><stop offset="1" stop-color="#7d858f"/></linearGradient></defs>
<rect x="2" y="2.200" width="47" height="34.500" rx="1" fill="#7f8893"/>
<rect x="3" y="4" width="45" height="31.700" fill="url(#scr)"/>
<rect x="22.300" y="36.700" width="6.400" height="4.600" fill="#8f97a1"/>
<rect x="14.700" y="41.200" width="21.600" height="2.800" rx="1" fill="url(#stand)"/>
</svg>
<div class="dl" style="left:3px;top:66.500px;width:80px">此电脑</div>
<svg width="48" height="52" style="left:20px;top:118px"><defs>
<linearGradient id="bin" x1="0" y1="0" x2="1" y2="0"><stop offset="0" stop-color="#a9aeb4"/><stop offset=".25" stop-color="#c9cdd2"/><stop offset=".7" stop-color="#b9bdc3"/><stop offset="1" stop-color="#8d9298"/></linearGradient>
<linearGradient id="binv" x1="0" y1="0" x2="0" y2="1"><stop offset="0" stop-color="#fff" stop-opacity="0"/><stop offset="1" stop-color="#e6e8ea" stop-opacity=".55"/></linearGradient></defs>
<path d="M2.800 6.500L6 2.300h32.500l3.200 4.200-5.300 42.700H8.400z" fill="url(#bin)"/>
<path d="M2.800 6.500L6 2.300h32.500l3.200 4.200-5.300 42.700H8.400z" fill="url(#binv)"/>
<path d="M2.800 6.500L6 2.300h32.500l3.200 4.200z" fill="#8f949b"/>
<g fill="#1c92ea">
<path d="M17 16.500l4.500-2.500 5 .8 3.300 5.200-3.800 2.200-2-3.300-2.800 2.600z"/>
<path d="M11.500 25.500l4.300-4 1.800 5.500 2 6.500-5.500 1.200-3-4.700z" fill="#2aa1f2"/>
<path d="M22.500 33l5-6.500 2 2.500 3.700-3.200 1 5.200-4.200 5.500-4.500-.5z" fill="#1687e2"/>
</g></svg>
<div class="dl" style="left:3px;top:175.200px;width:80px">回收站</div>
<svg width="56" height="44" style="left:15px;top:231px"><defs>
<linearGradient id="cpo" x1="0" y1="0" x2="1" y2="1"><stop offset="0" stop-color="#53b8ee"/><stop offset="1" stop-color="#2a8fe0"/></linearGradient>
<linearGradient id="cpi" x1="0" y1="0" x2="0" y2="1"><stop offset="0" stop-color="#a7ddf9"/><stop offset="1" stop-color="#c9ebfb"/></linearGradient>
<linearGradient id="pie" x1="0" y1="0" x2="0" y2="1"><stop offset="0" stop-color="#3ba4f0"/><stop offset="1" stop-color="#1276dc"/></linearGradient></defs>
<rect x="1.800" y="1.800" width="53.300" height="40.500" rx="2.500" fill="url(#cpo)"/>
<rect x="4.800" y="4.800" width="47.300" height="34.500" rx="1" fill="url(#cpi)"/>
<circle cx="19.300" cy="19" r="10.300" fill="url(#pie)"/>
<path d="M19.800 18.500V7.800c6 0 10.500 4.500 10.500 10.700z" fill="#f7941d" stroke="#dff1fc" stroke-width="1.200"/>
<path d="M30.500 18.800h3.800v-7.300h6.500" fill="none" stroke="#1c3f6e" stroke-width=".9"/>
<rect x="39.800" y="8.800" width="9.300" height="4.800" rx="2.400" fill="#1f7ad8"/><ellipse cx="43" cy="11.200" rx="2.600" ry="1.900" fill="#fff"/>
<rect x="39.800" y="16.500" width="9.300" height="4.800" rx="2.400" fill="#1f7ad8"/><ellipse cx="43" cy="18.900" rx="2.600" ry="1.900" fill="#fff"/>
<rect x="39.800" y="24.200" width="9.300" height="4.800" rx="2.400" fill="#1f7ad8"/><ellipse cx="45.800" cy="26.600" rx="2.600" ry="1.900" fill="#fff"/>
<rect x="8.800" y="33.200" width="16.500" height="1.900" fill="#f7941d"/><rect x="31" y="33.200" width="17.800" height="1.900" fill="#1f7ad8"/>
<circle cx="28.300" cy="34.100" r="2.500" fill="#1c6cc8" stroke="#dff1fc" stroke-width=".8"/>
</svg>
<div class="dl" style="left:3px;top:284.800px;width:80px">控制面板</div>
<svg width="54" height="54" viewBox="0 0 100 100" style="left:16.500px;top:335px"><defs>
<linearGradient id="e2a" x1="0" y1=".4" x2="1" y2=".6"><stop offset="0" stop-color="#2aa4e4"/><stop offset=".4" stop-color="#34bcc8"/><stop offset=".75" stop-color="#5ad47a"/><stop offset="1" stop-color="#7fe04a"/></linearGradient>
<linearGradient id="e3a" x1="0" y1="0" x2=".7" y2="1"><stop offset="0" stop-color="#2488dc"/><stop offset=".5" stop-color="#1a68c8"/><stop offset="1" stop-color="#1553ae"/></linearGradient>
<clipPath id="eca"><circle cx="50" cy="50" r="49"/></clipPath>
<linearGradient id="e4a" x1="0" y1="0" x2="1" y2="1"><stop offset="0" stop-color="#1a62c0"/><stop offset="1" stop-color="#1458b2"/></linearGradient>
</defs>
<circle cx="50" cy="50" r="49" fill="url(#e2a)"/>
<path d="M1.200 52C2 44 14 32 31 32c9 0 15 3 19 6 8 0 13 6 12 13-1 5-4 8-3 12 2 6 13 8 23 6 8-2 14-7 16-11l3 0A52 52 0 0 1 -2 52z" fill="url(#e3a)" clip-path="url(#eca)"/>
<path d="M28 64c0-14 9-25 22-27-5 0-10 1-14 4C27 47 23 58 26 70c4 15 17 26 33 28 4 0 8 0 12-1.500C50 97 28 84 28 64z" fill="#2a7ad6" opacity=".5"/>
<path d="M50 38c8 0 13 6 12 13-1 5-4 8-3 12 2 6 13 8 23 6 8-2 14-7 16-11l-2 10c-4 6-10 10-18 11-16 2-34-5-37-21-2-12 2-20 9-20z" fill="#08172f"/>
</svg><svg width="15" height="15" style="left:16.500px;top:374.500px"><rect x=".3" y=".3" width="14" height="14" rx="1" fill="#fff" stroke="#d5d9df" stroke-width=".5"/><path d="M4 11l6.500-6.500M5.500 4h5.300v5.300" fill="none" stroke="#2a8fe4" stroke-width="1.800"/></svg>
<div class="dl" style="left:3px;top:393.500px;width:82px;letter-spacing:1px">Microsoft</div>
<div class="dl" style="left:3px;top:412.300px;width:82px;letter-spacing:1px">Edge</div>
<svg width="28" height="26" style="left:19.500px;top:816.500px"><defs><linearGradient id="wg" x1="0" y1="0" x2="0" y2="1"><stop offset="0" stop-color="#59c4f8"/><stop offset="1" stop-color="#1f7fe0"/></linearGradient></defs>
<rect x=".5" y=".5" width="26.500" height="24" rx="2.500" fill="#1c6fcf" stroke="#2a86dc" stroke-width=".8"/>
<rect x="2.500" y="2.500" width="10.500" height="20" rx="1" fill="#f4f6f9"/>
<rect x="14" y="2.500" width="10.800" height="11" rx="1" fill="#5cc6f9"/><rect x="14" y="14" width="10.800" height="4.500" fill="#38a5f0"/><rect x="14" y="18.800" width="10.800" height="3.700" fill="#1f86e4"/>
</svg><div class="abs" style="left:696px;top:807.500px;width:44.500px;height:43px;border-radius:5px;background:rgba(255,255,255,.05);border:1px solid rgba(255,255,255,.045);box-sizing:border-box"></div><div class="abs" style="left:709.500px;top:846.500px;width:18px;height:3.400px;border-radius:2px;background:#4cb6f2"></div><svg width="28" height="28" style="left:410px;top:815px"><defs><linearGradient id="st" x1="0" y1="0" x2="1" y2="1"><stop offset="0" stop-color="#6fd6fb"/><stop offset="1" stop-color="#25a2ee"/></linearGradient></defs>
<rect x="1" y="1" width="12.300" height="12.300" rx="1" fill="url(#st)"/><rect x="14.700" y="1" width="12.300" height="12.300" rx="1" fill="url(#st)"/><rect x="1" y="14.700" width="12.300" height="12.300" rx="1" fill="url(#st)"/><rect x="14.700" y="14.700" width="12.300" height="12.300" rx="1" fill="url(#st)"/></svg><svg width="30" height="30" style="left:459px;top:814px"><circle cx="17.500" cy="11.800" r="8.600" fill="#1a2a55" fill-opacity=".6" stroke="#f2f4f8" stroke-width="2.700"/><path d="M11.300 18.300L4 26" stroke="#e8eaee" stroke-width="3.300" stroke-linecap="round"/></svg><svg width="30" height="28" style="left:508px;top:815px"><rect x="1.500" y="9.500" width="17.500" height="16" rx="1.500" fill="#6b6f76"/><rect x="9" y="2.500" width="19" height="17.500" rx="1.500" fill="#eceef1"/><rect x="9" y="9.500" width="10" height="10.500" fill="#c9ccd1"/></svg><svg width="30" height="28" style="left:557px;top:815px"><defs><linearGradient id="ex" x1="0" y1="0" x2="0" y2="1"><stop offset="0" stop-color="#ffd659"/><stop offset="1" stop-color="#f5b52c"/></linearGradient></defs>
<path d="M1 5.500c0-1.300.8-2 2-2h7l3 3h14c1.200 0 2 .8 2 2V23c0 1.200-.8 2-2 2H3c-1.200 0-2-.8-2-2z" fill="#f0a81c"/>
<path d="M1 10h28v13c0 1.200-.8 2-2 2H3c-1.200 0-2-.8-2-2z" fill="url(#ex)"/>
<path d="M8.500 25v-5.500c0-1 .7-1.700 1.700-1.700h9.600c1 0 1.700.7 1.700 1.700V25z" fill="#2a8fe6"/><rect x="11" y="20.500" width="8" height="1.800" rx=".9" fill="#1565c0"/></svg><svg width="29" height="29" viewBox="0 0 100 100" style="left:606px;top:814.500px"><defs>
<linearGradient id="e2b" x1="0" y1=".4" x2="1" y2=".6"><stop offset="0" stop-color="#2aa4e4"/><stop offset=".4" stop-color="#34bcc8"/><stop offset=".75" stop-color="#5ad47a"/><stop offset="1" stop-color="#7fe04a"/></linearGradient>
<linearGradient id="e3b" x1="0" y1="0" x2=".7" y2="1"><stop offset="0" stop-color="#2488dc"/><stop offset=".5" stop-color="#1a68c8"/><stop offset="1" stop-color="#1553ae"/></linearGradient>
<clipPath id="ecb"><circle cx="50" cy="50" r="49"/></clipPath>
<linearGradient id="e4b" x1="0" y1="0" x2="1" y2="1"><stop offset="0" stop-color="#1a62c0"/><stop offset="1" stop-color="#1458b2"/></linearGradient>
</defs>
<circle cx="50" cy="50" r="49" fill="url(#e2b)"/>
<path d="M1.200 52C2 44 14 32 31 32c9 0 15 3 19 6 8 0 13 6 12 13-1 5-4 8-3 12 2 6 13 8 23 6 8-2 14-7 16-11l3 0A52 52 0 0 1 -2 52z" fill="url(#e3b)" clip-path="url(#ecb)"/>
<path d="M28 64c0-14 9-25 22-27-5 0-10 1-14 4C27 47 23 58 26 70c4 15 17 26 33 28 4 0 8 0 12-1.500C50 97 28 84 28 64z" fill="#2a7ad6" opacity=".5"/>
<path d="M50 38c8 0 13 6 12 13-1 5-4 8-3 12 2 6 13 8 23 6 8-2 14-7 16-11l-2 10c-4 6-10 10-18 11-16 2-34-5-37-21-2-12 2-20 9-20z" fill="#14215a"/>
</svg><svg width="30" height="30" style="left:654.500px;top:813.500px"><path d="M9.500 9V6.500c0-2.200 1.500-3.700 3.500-3.700h4c2 0 3.500 1.500 3.500 3.700V9" fill="none" stroke="#3aa4ee" stroke-width="2"/>
<path d="M2 9.500c0-.8.500-1.300 1.300-1.300h23.400c.8 0 1.300.5 1.300 1.300v13.500c0 3-2 5-5 5H7c-3 0-5-2-5-5z" fill="#f3f4f6"/>
<rect x="9" y="12" width="5.300" height="5.300" fill="#f25022"/><rect x="15.300" y="12" width="5.300" height="5.300" fill="#7fba00"/><rect x="9" y="18.300" width="5.300" height="5.300" fill="#00a4ef"/><rect x="15.300" y="18.300" width="5.300" height="5.300" fill="#ffb900"/></svg><svg width="28" height="32" style="left:705px;top:813.500px"><path d="M7 2h17c2.200 0 2.600 3.300 0 3.700h-2.500L20 25H5z" fill="#fbf3d2" stroke="#d8c68a" stroke-width=".8"/>
<path d="M1.500 24.700h19.700c2 .4 2 3.600 0 4H1.800c-1.800-.5-1.800-3.400-.3-4z" fill="#f5e7b0" stroke="#d8c68a" stroke-width=".8"/>
<path d="M9.300 7.500h10M9 10.200h10M8.800 12.900h10M8.500 15.600h10M8.300 18.300h10M8 21h10" stroke="#8f8f8f" stroke-width="1.200"/></svg><svg width="20" height="12" style="left:934px;top:822px"><path d="M3 9.500l7-7 7 7" fill="none" stroke="#e6e8ec" stroke-width="1.700"/></svg>
<div class="abs" style="left:966px;top:819px;color:#f0f0f0;font-size:15px;line-height:18px;white-space:nowrap">中</div>
<svg width="180" height="80" style="left:965px;top:778px" viewBox="965 778 180 80">
<path d="M996 843 L1000 826 L1012 812 L1030 808 L1040 822 L1036 846 Z" fill="#f4f4f4"/><path d="M977 826 C980 818 988 814 996 815 L990 828 Z" fill="#f0f0f0"/><path d="M1030 819 h14 v10 h-14z" fill="#e8e8e8"/>
<g font-family="Liberation Sans,sans-serif" fill="#fff" font-weight="bold">
<text x="1046" y="829" font-size="20" textLength="88" lengthAdjust="spacingAndGlyphs">系统之家</text>
<text x="1062" y="842" font-size="12" font-weight="normal">2022.3.7</text>
<text x="1030" y="846.500" font-size="8" font-family="Liberation Serif,serif" font-weight="normal" textLength="100" lengthAdjust="spacingAndGlyphs">XITONGZHIJIA.NET</text>
</g>
<g fill="none" stroke="#1eb760" stroke-width="11" stroke-linecap="round" stroke-linejoin="round">
<path d="M982.500 789h53"/><path d="M977.500 811.700h58"/>
<path d="M1006.500 789c0 22-3 42-26 53"/><path d="M1009 814c4 12 11 22 26.500 28"/>
</g>
<rect x="1041" y="786.500" width="100" height="26" rx="13" fill="#f2693a"/>
<text x="1091" y="804.500" text-anchor="middle" font-family="Liberation Sans,sans-serif" font-weight="bold" font-size="13" fill="#fff" stroke="#6a2c14" stroke-width=".8" paint-order="stroke" textLength="86" lengthAdjust="spacingAndGlyphs">www.TTzip.com</text>
<text x="1042.500" y="845" font-family="Liberation Sans,sans-serif" font-weight="bold" font-size="27" fill="#1eb760" stroke="#1eb760" stroke-width="1.100" textLength="95" lengthAdjust="spacingAndGlyphs">天天下載</text>
</svg><div class="abs" style="left:1141.500px;top:0;width:1.500px;height:856px;background:#000"></div><div class="abs" style="left:1143px;top:0;width:2px;height:856px;background:#5e5e5e"></div></body></html>
